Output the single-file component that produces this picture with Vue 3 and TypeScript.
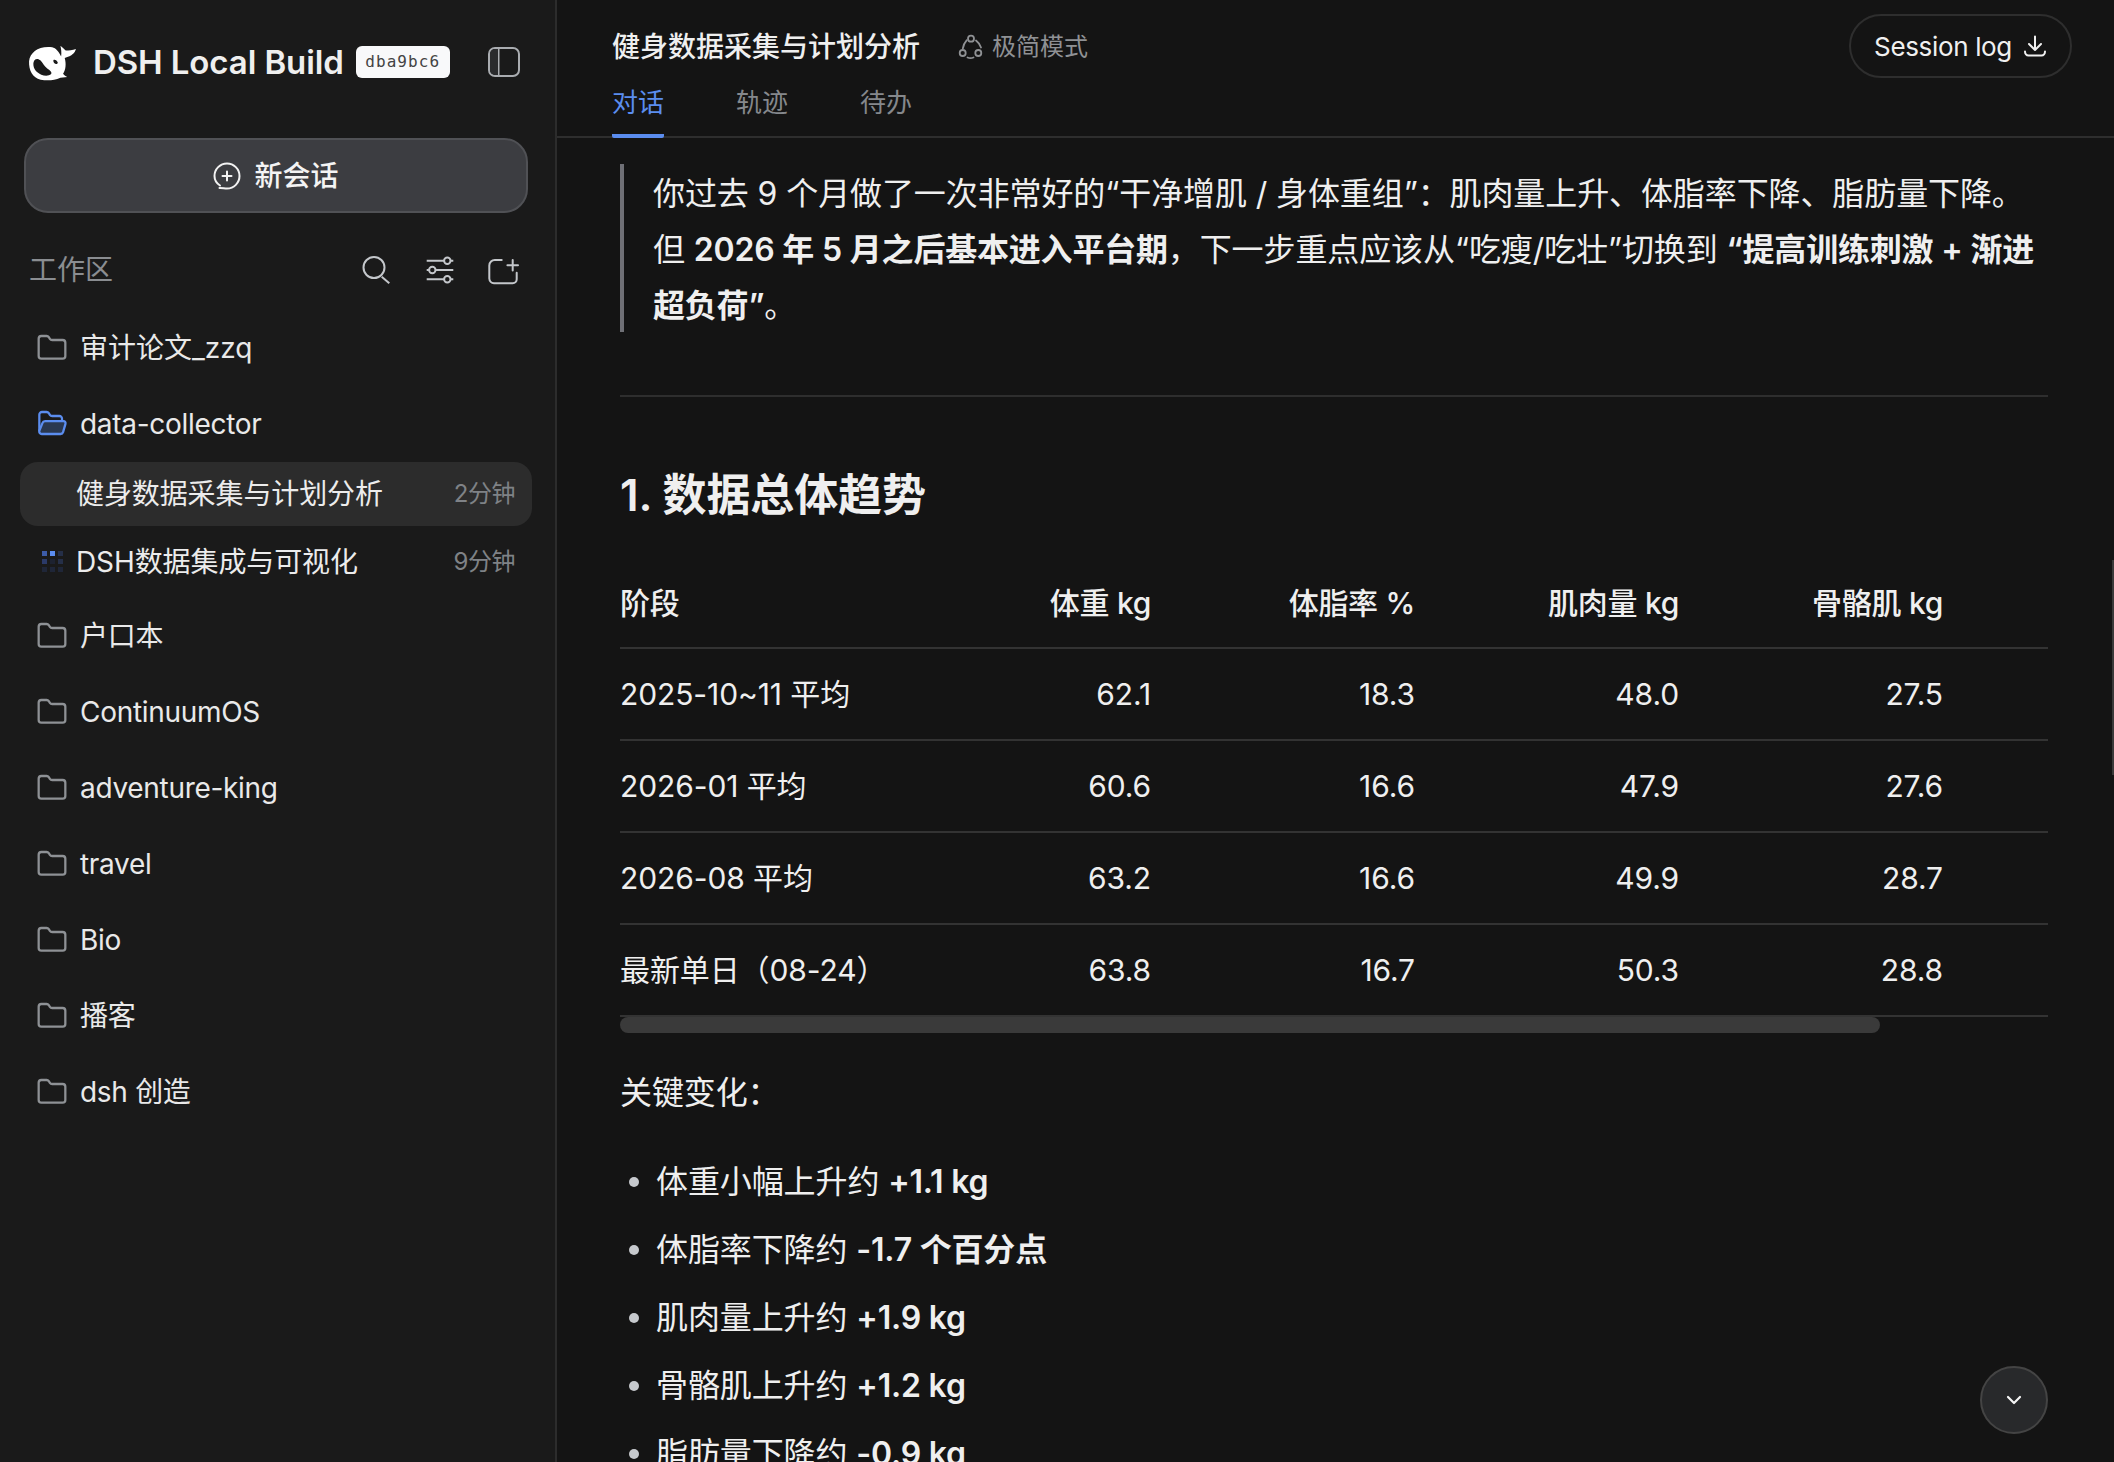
<script setup lang="ts">
const otherFolders = ['户口本', 'ContinuumOS', 'adventure-king', 'travel', 'Bio', '播客', 'dsh 创造']

const dots = [
  '#3d5ca8', '#5b8def', '#252f48',
  '#2b3a68', '#1d2230', '#252f48',
  '#1f2638', '#1f2638', '#1f2638'
]

const rows = [
  ['2025-10~11 平均', '62.1', '18.3', '48.0', '27.5'],
  ['2026-01 平均', '60.6', '16.6', '47.9', '27.6'],
  ['2026-08 平均', '63.2', '16.6', '49.9', '28.7'],
  ['最新单日（08-24）', '63.8', '16.7', '50.3', '28.8']
]

const changes = [
  ['体重小幅上升约 ', '+1.1 kg'],
  ['体脂率下降约 ', '-1.7 个百分点'],
  ['肌肉量上升约 ', '+1.9 kg'],
  ['骨骼肌上升约 ', '+1.2 kg'],
  ['脂肪量下降约 ', '-0.9 kg']
]

const folderPath = 'M20 20a2 2 0 0 0 2-2V8a2 2 0 0 0-2-2h-7.9a2 2 0 0 1-1.69-.9L9.6 3.9A2 2 0 0 0 7.93 3H4a2 2 0 0 0-2 2v13a2 2 0 0 0 2 2Z'
</script>

<template>
  <div class="app">
    <aside class="sidebar">
      <div class="brand">
        <svg class="logo" viewBox="20 20 155 112" fill="#fff">
          <path fill-rule="evenodd" d="M25 72C28 45 55 25 95 30C106 32 116 44 122 58C124 46 122 34 120 25C126 30 132 35 136 40C146 40 156 38 167 35C164 46 156 56 133 62C138 80 136 98 128 110C131 115 137 118 141 120L120 122C100 131 80 131 60 128C36 122 24 100 25 72ZM38 80C38 66 50 60 60 70C68 80 72 88 80 94C90 100 95 106 92 111C84 118 72 117 62 113C48 107 38 96 38 80ZM100 68C104 66 110 70 112 76C112 82 104 82 100 76C98 72 98 70 100 68Z" />
        </svg>
        <span class="brand-name">DSH Local Build</span>
        <span class="build-tag">dba9bc6</span>
        <svg class="toggle" viewBox="0 0 32 30" fill="none" stroke="#a9acb0" stroke-width="2">
          <rect x="1" y="1" width="30" height="28" rx="6" />
          <path d="M10.5 1v28" />
          <path d="M2 7a5 5 0 0 1 5-5h3v26H7a5 5 0 0 1-5-5Z" fill="#2a2b2d" stroke="none" />
        </svg>
      </div>

      <button class="new-chat">
        <svg width="28" height="28" viewBox="0 0 28 28" fill="none" stroke="#f2f2f2" stroke-width="2" stroke-linecap="round">
          <path d="M7 23.500C3.500 21.200 1.500 17.800 1.500 14a12.500 12.500 0 1 1 12.500 12.500c-2.400 0-5-.8-7.500-.6" />
          <path d="M14 9.500v9M9.500 14h9" />
        </svg>
        新会话
      </button>

      <div class="section-head">
        <span class="section-label">工作区</span>
        <div class="section-actions">
          <svg viewBox="0 0 32 32" fill="none" stroke="#c4c7cb" stroke-width="2">
            <circle cx="14" cy="13.500" r="10.500" />
            <path d="M21.700 22.700l7.600 6.600" />
          </svg>
          <svg viewBox="0 0 32 32" fill="none" stroke="#c4c7cb" stroke-width="2">
            <path d="M2.700 6.700h26.600M2.700 16h26.600M2.700 25.300h26.600" />
            <circle cx="23.300" cy="6.700" r="3.200" fill="#1a1a1a" />
            <circle cx="8.300" cy="16" r="3.200" fill="#1a1a1a" />
            <circle cx="23.300" cy="25.300" r="3.200" fill="#1a1a1a" />
          </svg>
          <svg viewBox="0 0 32 32" fill="none" stroke="#c4c7cb" stroke-width="2" stroke-linecap="round">
            <path d="M13.700 6H7a5.500 5.500 0 0 0-5.700 5.500v13A5 5 0 0 0 6 29.300h18.700a4 4 0 0 0 4-4v-6.600" />
            <path d="M24.700 6v10.600M19.400 11.300H30" />
          </svg>
        </div>
      </div>

      <div class="folder untracked">
        <svg class="folder-icon" viewBox="0 0 24 24" fill="none" stroke="#8e9195" stroke-width="1.700" stroke-linejoin="round">
          <path :d="folderPath" />
        </svg>
        审计论文_zzq
      </div>

      <div class="folder">
        <svg class="folder-icon" viewBox="0 0 24 24" fill="none" stroke="#5b8def" stroke-width="1.700" stroke-linejoin="round" stroke-linecap="round">
          <path d="M2.500 17V5a2 2 0 0 1 2-2h3.400a2 2 0 0 1 1.700.9l.8 1.200a2 2 0 0 0 1.700.9h5.400a2 2 0 0 1 2 2v1.500" />
          <path d="M4.900 11.200A2 2 0 0 1 6.800 9.800H20.600a1.600 1.600 0 0 1 1.500 2.100l-1.800 6.200a2 2 0 0 1-1.900 1.400H4.300a1.900 1.900 0 0 1-1.800-2.400Z" fill="#2a3850" />
        </svg>
        data-collector
      </div>

      <div class="session active">
        <span class="session-title">健身数据采集与计划分析</span>
        <span class="session-time">2分钟</span>
      </div>
      <div class="session">
        <div class="dots">
          <i v-for="(color, i) in dots" :key="i" :style="{ background: color }"></i>
        </div>
        <span class="session-title">DSH数据集成与可视化</span>
        <span class="session-time">9分钟</span>
      </div>

      <div class="folders-rest">
        <div v-for="name in otherFolders" :key="name" class="folder">
          <svg class="folder-icon" viewBox="0 0 24 24" fill="none" stroke="#8e9195" stroke-width="1.700" stroke-linejoin="round">
            <path :d="folderPath" />
          </svg>
          {{ name }}
        </div>
      </div>
    </aside>

    <main class="main">
      <header class="top-bar">
        <div class="top-left">
          <div class="title-row">
            <span class="chat-title">健身数据采集与计划分析</span>
            <span class="mode">
              <svg width="26" height="28" viewBox="7 6 26 28" fill="none" stroke="#8f9194" stroke-width="1.800" stroke-linecap="round">
                <circle cx="20" cy="11.700" r="3" />
                <circle cx="11.700" cy="26" r="3" />
                <circle cx="27.300" cy="26" r="3" />
                <path d="M15.800 13.200C13.800 15.400 12.400 18 11.800 21.500M25 13.500C27 15 29 17.500 30 20.500M16.500 30.500C18.500 31.300 20.500 31.300 22.500 30.500" />
              </svg>
              极简模式
            </span>
          </div>
          <nav class="tabs">
            <span class="tab current">对话</span>
            <span class="tab">轨迹</span>
            <span class="tab">待办</span>
          </nav>
        </div>
        <button class="session-log">
          Session log
          <svg width="24" height="24" viewBox="0 0 24 24" fill="none" stroke="#f0f0f0" stroke-width="2" stroke-linecap="round" stroke-linejoin="round">
            <path d="M12 2.500v13M6 10l6 6 6-6" />
            <path d="M2 17.500c0 2.200 1.400 4 3.500 4h13c2.100 0 3.500-1.800 3.500-4" />
          </svg>
        </button>
      </header>

      <section class="content">
        <blockquote class="quote">
          你过去 9 个月做了一次非常好的“干净增肌 / 身体重组”：肌肉量上升、体脂率下降、脂肪量下降。<br />
          但 <b>2026 年 5 月之后基本进入平台期</b>，下一步重点应该从“吃瘦/吃壮”切换到 <b>“提高训练刺激 + 渐进超负荷”</b>。
        </blockquote>

        <hr class="rule" />

        <h2 class="heading">1. 数据总体趋势</h2>

        <div class="table-wrap">
          <table class="stats">
            <thead>
              <tr>
                <th>阶段</th>
                <th class="num">体重 kg</th>
                <th class="num">体脂率 %</th>
                <th class="num">肌肉量 kg</th>
                <th class="num">骨骼肌 kg</th>
                <th></th>
              </tr>
            </thead>
            <tbody>
              <tr v-for="row in rows" :key="row[0]">
                <td>{{ row[0] }}</td>
                <td class="num">{{ row[1] }}</td>
                <td class="num">{{ row[2] }}</td>
                <td class="num">{{ row[3] }}</td>
                <td class="num">{{ row[4] }}</td>
                <td></td>
              </tr>
            </tbody>
          </table>
          <div class="table-thumb"></div>
        </div>

        <p class="lead">关键变化：</p>
        <ul class="changes">
          <li v-for="item in changes" :key="item[1]">{{ item[0] }}<b>{{ item[1] }}</b></li>
        </ul>
      </section>

      <div class="page-thumb"></div>
      <button class="to-bottom">
        <svg width="24" height="24" viewBox="0 0 24 24" fill="none" stroke="#f5f5f5" stroke-width="2.200" stroke-linecap="round" stroke-linejoin="round">
          <path d="M6 9l6 6 6-6" />
        </svg>
      </button>
    </main>
  </div>
</template>

<style scoped>
.app {
  display: flex;
  width: 2114px;
  height: 1462px;
  overflow: hidden;
  font-family: Inter, "Noto Sans CJK SC", sans-serif;
  color: #efefef;
}

.sidebar {
  width: 557px;
  flex-shrink: 0;
  box-sizing: border-box;
  background: #1a1a1a;
  border-right: 2px solid #2c2c2c;
  padding-left: 20px;
  padding-right: 23px;
}

.brand {
  height: 124px;
  display: flex;
  align-items: center;
  margin-left: 7px;
  margin-right: 12px;
}
.logo { width: 52px; height: 37px; flex-shrink: 0; }
.brand-name {
  margin-left: 14px;
  font-size: 33px;
  font-weight: 600;
  letter-spacing: -0.1px;
  white-space: nowrap;
}
.build-tag {
  margin-left: 12px;
  width: 94px;
  height: 32px;
  box-sizing: border-box;
  border-radius: 6px;
  background: #f8f9fa;
  color: #444;
  font-family: "DejaVu Sans Mono", monospace;
  font-size: 16px;
  letter-spacing: 1.1px;
  text-align: center;
  line-height: 32px;
}
.toggle { width: 32px; height: 30px; margin-left: auto; }

.new-chat {
  display: flex;
  align-items: center;
  justify-content: center;
  gap: 13px;
  width: 504px;
  height: 75px;
  margin: 14px 0 0 4px;
  box-sizing: border-box;
  border: 2px solid #505155;
  border-radius: 24px;
  background: #3c3d41;
  color: #f4f4f4;
  font-family: inherit;
  font-size: 28px;
  line-height: 40px;
  font-weight: 500;
}

.section-head {
  display: flex;
  align-items: center;
  justify-content: space-between;
  height: 56px;
  margin: 29px 12px 12px 0;
  padding-left: 9px;
}
.section-label { font-size: 28px; line-height: 40px; color: #8a8d91; }
.section-actions { display: flex; gap: 32px; }
.section-actions svg { width: 32px; height: 32px; }

.folder {
  display: flex;
  align-items: center;
  height: 76px;
  padding-left: 16px;
  gap: 12px;
  font-size: 28px;
  line-height: 40px;
  letter-spacing: -0.3px;
  color: #e9e9e9;
}
.folder.untracked { letter-spacing: 0; }
.folder-icon { width: 32px; height: 32px; flex-shrink: 0; }

.session {
  position: relative;
  display: flex;
  align-items: center;
  justify-content: space-between;
  height: 64px;
  width: 512px;
  box-sizing: border-box;
  padding: 0 17px 0 56px;
  border-radius: 18px;
}
.session.active { background: #2c2c2c; margin-bottom: 4px; }
.session-title { font-size: 28px; line-height: 40px; letter-spacing: -0.1px; color: #ececec; white-space: nowrap; }
.session-time { font-size: 24px; line-height: 40px; letter-spacing: -0.5px; color: #7f8286; white-space: nowrap; }

.dots {
  position: absolute;
  left: 22px;
  top: 21px;
  display: grid;
  grid-template-columns: repeat(3, 5px);
  gap: 3px;
}
.dots i { display: block; width: 5px; height: 5px; }

.folders-rest { margin-top: 4px; }

.main {
  position: relative;
  flex: 1;
  min-width: 0;
  background: #141414;
}

.top-bar {
  display: flex;
  justify-content: space-between;
  align-items: flex-start;
  height: 138px;
  box-sizing: border-box;
  border-bottom: 2px solid #2e2e2e;
  padding-left: 55px;
  padding-right: 42px;
}
.title-row {
  display: flex;
  align-items: center;
  height: 64px;
  box-sizing: border-box;
  padding-top: 2px;
  margin-top: 14px;
  line-height: 40px;
}
.chat-title { font-size: 28px; font-weight: 500; }
.mode {
  display: flex;
  align-items: center;
  gap: 8px;
  margin-left: 38px;
  font-size: 24px;
  color: #8f9194;
}
.tabs {
  position: relative;
  display: flex;
  gap: 72px;
}
.tab {
  display: block;
  line-height: 50px;
  height: 60px;
  box-sizing: border-box;
  padding-bottom: 10px;
  font-size: 26px;
  color: #85888c;
  border-bottom: 4px solid transparent;
}
.tab.current {
  color: #5b8def;
  border-bottom-color: #5b8def;
  border-radius: 0 0 2px 2px;
}

.session-log {
  display: flex;
  align-items: center;
  gap: 11px;
  height: 64px;
  width: 223px;
  justify-content: center;
  margin-top: 14px;
  border: 2px solid #2e2e2e;
  border-radius: 32px;
  background: transparent;
  color: #f0f0f0;
  font-family: inherit;
  font-size: 26px;
  letter-spacing: -0.35px;
}

.content {
  padding: 26px 66px 0 63px;
  font-size: 32px;
  line-height: 56px;
  letter-spacing: -0.1px;
}

.quote {
  height: 168px;
  box-sizing: border-box;
  margin: 0;
  border-left: 4px solid #6f7076;
  padding: 2px 0 0 29px;
}
.quote b, .changes b { font-weight: 600; letter-spacing: -0.2px; }

.rule {
  height: 2px;
  margin: 63px 0 0;
  border: 0;
  background: #2e2e2e;
}

.heading {
  margin: 68px 0 34px;
  font-size: 44px;
  line-height: 60px;
  font-weight: 600;
}

.table-wrap { position: relative; }
.stats {
  width: 100%;
  table-layout: fixed;
  border-collapse: collapse;
  font-size: 30px;
  line-height: 40px;
}
.stats th:first-child { width: 267px; }
.stats th { height: 88px; padding: 0; text-align: left; font-weight: 500; letter-spacing: -0.3px; border-bottom: 2px solid #333; }
.stats td { height: 90px; border-bottom: 2px solid #333; padding: 0; }
.stats th:last-child { width: 105px; }
.stats .num { text-align: right; }

.table-thumb {
  position: absolute;
  left: 0;
  bottom: -16px;
  width: 1260px;
  height: 16px;
  border-radius: 8px;
  background: #3a3a3a;
}

.lead { margin: 48px 0 33px; }

.changes {
  list-style: none;
  margin: 0;
  padding: 0;
  display: flex;
  flex-direction: column;
  gap: 12px;
}
.changes li { position: relative; padding-left: 36px; }
.changes li::before {
  content: "";
  position: absolute;
  left: 9px;
  top: 23px;
  width: 10px;
  height: 10px;
  border-radius: 50%;
  background: #c6c9cd;
}

.page-thumb {
  position: absolute;
  right: 0;
  top: 560px;
  width: 2px;
  height: 215px;
  background: #3a3a3a;
}

.to-bottom {
  position: absolute;
  left: 1423px;
  top: 1366px;
  display: flex;
  align-items: center;
  justify-content: center;
  width: 68px;
  height: 68px;
  padding: 0;
  border: 2px solid #444;
  border-radius: 50%;
  background: #28292b;
}
</style>

<style>
html, body {
  margin: 0;
  background: #141414;
  overflow: hidden;
}
</style>
